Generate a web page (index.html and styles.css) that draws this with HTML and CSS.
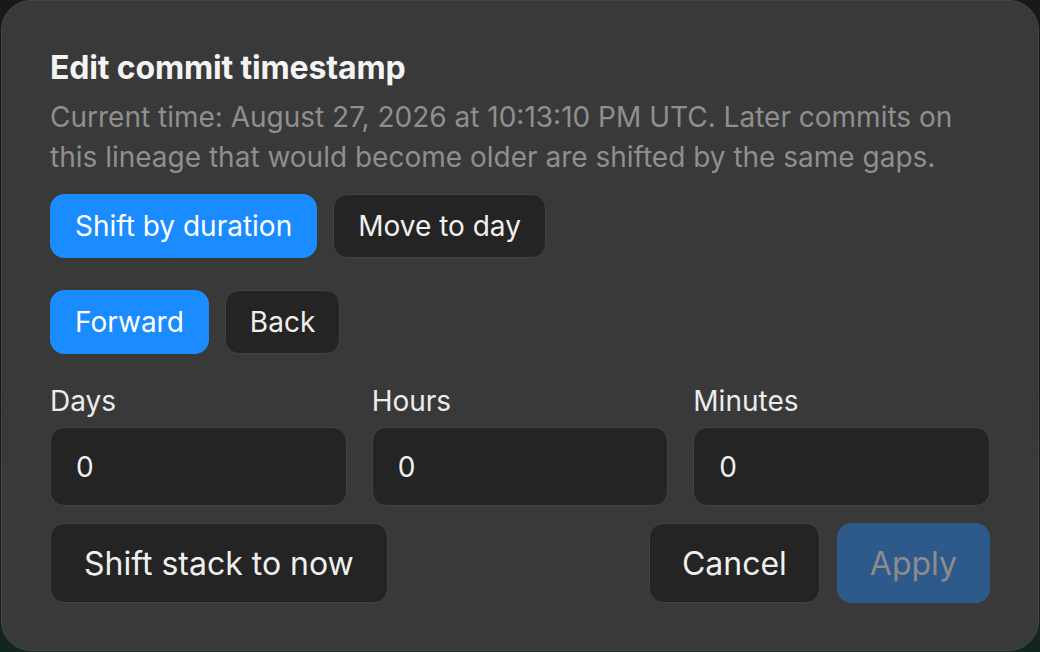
FILE: index.html
```html
<!DOCTYPE html>
<html lang="en">
<head>
    <meta charset="UTF-8">
    <meta name="viewport" content="width=device-width, initial-scale=1.0">
    <title>Edit commit timestamp</title>
    <link rel="stylesheet" href="styles.css">
</head>
<body>
    <div class="backdrop">
        <div class="dialog">
            <h1 class="title">Edit commit timestamp</h1>
            <p class="desc">Current time: August 27, 2026 at 10:13:10 PM UTC. Later commits on this lineage that would become older are shifted by the same gaps.</p>

            <div class="seg-row">
                <button class="btn active">Shift by duration</button>
                <button class="btn">Move to day</button>
            </div>

            <div class="seg-row second">
                <button class="btn active">Forward</button>
                <button class="btn">Back</button>
            </div>

            <div class="fields">
                <label class="field">
                    <span class="field-label">Days</span>
                    <input type="text" value="0">
                </label>
                <label class="field">
                    <span class="field-label">Hours</span>
                    <input type="text" value="0">
                </label>
                <label class="field">
                    <span class="field-label">Minutes</span>
                    <input type="text" value="0">
                </label>
            </div>

            <div class="footer">
                <button class="btn big wide">Shift stack to now</button>
                <div class="footer-right">
                    <button class="btn big">Cancel</button>
                    <button class="btn big primary" disabled>Apply</button>
                </div>
            </div>
        </div>
    </div>
</body>
</html>
```

FILE: styles.css
```css
* {
    margin: 0;
    padding: 0;
    box-sizing: border-box;
}

body {
    width: 1040px;
    height: 652px;
    overflow: hidden;
    background: linear-gradient(to bottom, #181818 0%, #181818 60%, #11261c 100%);
    font-family: Inter, "Noto Sans", sans-serif;
}

.backdrop {
    padding-left: 1px;
}

.dialog {
    width: 1038px;
    height: 651px;
    background: #393939;
    border: 1px solid #464646;
    border-radius: 30px;
    padding: 47px 48px 0 48px;
    color: #f2f2f2;
}

.title {
    font-size: 32px;
    line-height: 40px;
    font-weight: 700;
    letter-spacing: -0.005em;
    color: #f4f4f4;
    margin-bottom: 9px;
}

.desc {
    font-size: 28px;
    line-height: 40px;
    color: #8f8f8f;
}

.seg-row {
    display: flex;
    gap: 16px;
    margin-top: 17px;
}

.seg-row.second {
    margin-top: 32px;
}

.btn {
    height: 64px;
    padding: 0 24px;
    font-family: inherit;
    font-size: 28px;
    color: #f0f0f0;
    background: #242424;
    border: 1px solid #424242;
    border-radius: 14px;
    cursor: pointer;
}

.btn.active {
    background: #1a8cff;
    border-color: #1a8cff;
    color: #ffffff;
}

.fields {
    display: grid;
    grid-template-columns: repeat(3, 1fr);
    gap: 25px;
    margin-top: 31px;
}

.field {
    display: flex;
    flex-direction: column;
    gap: 10px;
}

.field-label {
    font-size: 28px;
    line-height: 32px;
    color: #ececec;
}

.field input {
    height: 79px;
    width: 100%;
    padding: 0 25px;
    font-family: inherit;
    font-size: 28px;
    color: #f0f0f0;
    background: #242424;
    border: 1px solid #424242;
    border-radius: 14px;
    outline: none;
}

.footer {
    display: flex;
    justify-content: space-between;
    margin-top: 17px;
}

.footer-right {
    display: flex;
    gap: 17px;
}

.btn.big {
    height: 80px;
    padding: 0 32px;
    font-size: 32px;
}

.btn.big.wide {
    padding: 0 33px;
}

.btn.primary {
    background: #2d5a8b;
    border-color: #2d5a8b;
    color: #8c8c8c;
    cursor: default;
}
```
